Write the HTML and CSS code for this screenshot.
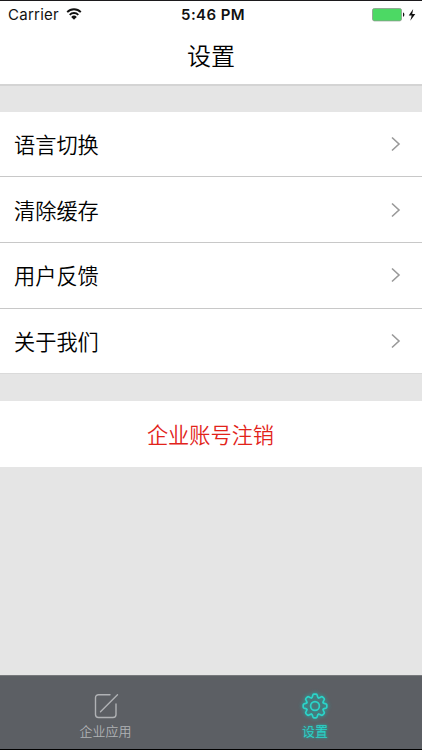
FILE: index.html
```html
<!DOCTYPE html>
<html lang="zh-CN">
<head>
    <meta charset="UTF-8">
    <meta name="viewport" content="width=device-width, initial-scale=1.0">
    <title>设置</title>
    <link rel="stylesheet" href="styles.css">
</head>
<body>
    <div class="screen">
        <header class="header">
            <div class="status-bar">
                <div class="carrier">
                    <span>Carrier</span>
                    <svg class="wifi" width="16" height="12" viewBox="0 0 16 12">
                        <path d="M1.2 4.1a9.6 9.6 0 0 1 13.6 0M3.7 6.8a6.1 6.1 0 0 1 8.6 0" fill="none" stroke="#111" stroke-width="1.9"/>
                        <path d="M8 11.7 5.2 8.9a4 4 0 0 1 5.6 0z" fill="#111"/>
                    </svg>
                </div>
                <div class="time">5:46 PM</div>
                <div class="battery">
                    <svg width="44" height="14" viewBox="0 0 44 14">
                        <rect x=".5" y=".5" width="29" height="12.4" rx="1.8" fill="#4cd964" stroke="#8b9a8d" stroke-width=".8"/>
                        <path d="M31 4.6c1.8.3 1.8 3.9 0 4.2z" fill="#111"/>
                        <path d="M41.2 1 36.7 7.5h3L38.3 12.7 43.3 6h-3.1z" fill="#111"/>
                    </svg>
                </div>
            </div>
            <h1 class="title">设置</h1>
        </header>

        <main class="content">
            <ul class="menu">
                <li class="menu-item">
                    <span>语言切换</span>
                    <svg class="arrow" width="10" height="16" viewBox="0 0 10 16"><path d="M1 1.5 8 8l-7 6.5"/></svg>
                </li>
                <li class="menu-item">
                    <span>清除缓存</span>
                    <svg class="arrow" width="10" height="16" viewBox="0 0 10 16"><path d="M1 1.5 8 8l-7 6.5"/></svg>
                </li>
                <li class="menu-item">
                    <span>用户反馈</span>
                    <svg class="arrow" width="10" height="16" viewBox="0 0 10 16"><path d="M1 1.5 8 8l-7 6.5"/></svg>
                </li>
                <li class="menu-item">
                    <span>关于我们</span>
                    <svg class="arrow" width="10" height="16" viewBox="0 0 10 16"><path d="M1 1.5 8 8l-7 6.5"/></svg>
                </li>
            </ul>
            <button class="logout" type="button">企业账号注销</button>
        </main>

        <nav class="tabs">
            <a class="tab">
                <svg class="tab-icon" width="28" height="28" viewBox="-14 -14 28 28">
                    <path d="M4 -11.3H-7.5a3 3 0 0 0-3 3V8.5a3 3 0 0 0 3 3H7a3 3 0 0 0 3-3V-2M11.5 -11.2-5.5 5.8"/>
                </svg>
                <span>企业应用</span>
            </a>
            <a class="tab active">
                <svg class="tab-icon" width="28" height="28" viewBox="-14 -14 28 28">
                    <defs>
                        <path id="tooth" d="M-3.4-8.2C-2-8.8-2.7-11.8-1.2-11.8H1.2C2.7-11.8 2-8.8 3.4-8.2"/>
                    </defs>
                    <use href="#tooth"/>
                    <use href="#tooth" transform="rotate(45)"/>
                    <use href="#tooth" transform="rotate(90)"/>
                    <use href="#tooth" transform="rotate(135)"/>
                    <use href="#tooth" transform="rotate(180)"/>
                    <use href="#tooth" transform="rotate(225)"/>
                    <use href="#tooth" transform="rotate(270)"/>
                    <use href="#tooth" transform="rotate(315)"/>
                    <circle r="4.4"/>
                </svg>
                <span>设置</span>
            </a>
        </nav>
    </div>
</body>
</html>
```

FILE: styles.css
```css
* {
    box-sizing: border-box;
}
body {
    margin: 0;
    font-family: "Noto Sans CJK SC", sans-serif;
    font-weight: 350;
    color: #000;
    background-color: #e5e5e5;
}
.screen {
    display: flex;
    flex-direction: column;
    height: 750px;
    border-top: 1px solid #1c1a1d;
    border-bottom: 1px solid #000;
}
.header {
    height: 85px;
    background-color: #fff;
    border-bottom: 2px solid #d4d4d4;
}
.status-bar {
    display: grid;
    grid-template-columns: 1fr auto 1fr;
    align-items: center;
    height: 27px;
    padding: 0 6px 0 8px;
    font-family: Inter, sans-serif;
    font-size: 15px;
    line-height: 27px;
    color: #111;
}
.carrier {
    display: flex;
    align-items: center;
    gap: 7px;
    font-weight: 400;
    letter-spacing: 0.25px;
}
.wifi {
    margin-bottom: 1px;
}
.time {
    padding-left: 2px;
    font-weight: 600;
    font-size: 15px;
    letter-spacing: 0.4px;
}
.battery {
    display: flex;
    justify-content: flex-end;
}
.title {
    margin: 0;
    font-size: 24px;
    font-weight: 350;
    line-height: 54px;
    text-align: center;
}
.content {
    flex: 1;
    padding-top: 25.6px;
}
.menu {
    margin: 0 0 27px;
    padding: 0;
    list-style: none;
}
.menu-item {
    display: flex;
    align-items: center;
    justify-content: space-between;
    height: 65.7px;
    padding: 0 21px 0 14px;
    font-size: 21.2px;
    background-color: #fff;
    border-bottom: 1px solid #c8c8c8;
}
.menu-item span {
    padding-bottom: 1px;
}
.menu-item:last-child {
    border-bottom-color: #dadada;
}
.arrow {
    fill: none;
    stroke: #999;
    stroke-width: 1.6;
}
.logout {
    display: block;
    width: 100%;
    height: 66px;
    padding: 0 1px 2px 0;
    border: none;
    font-family: inherit;
    font-size: 21.2px;
    font-weight: 350;
    color: #e2231a;
    background-color: #fff;
}
.tabs {
    display: flex;
    height: 74px;
    background-color: #5c5f64;
    border-top: 1px solid #77797c;
}
.tab {
    width: 50%;
    display: flex;
    flex-direction: column;
    align-items: center;
    padding-top: 16px;
    font-size: 13px;
    line-height: 18px;
    color: #b0b2b5;
}
.tab-icon {
    margin-bottom: 2px;
    fill: none;
    stroke: currentColor;
    stroke-width: 1.4;
    stroke-linecap: round;
    overflow: visible;
}
.active {
    padding-right: 3px;
    color: #2bd5c9;
}
.active .tab-icon {
    stroke-width: 1.7;
    filter: drop-shadow(0 0 2px #12bdb8);
}
.active span {
    text-shadow: 0 0 3px #12bdb8;
}
```
